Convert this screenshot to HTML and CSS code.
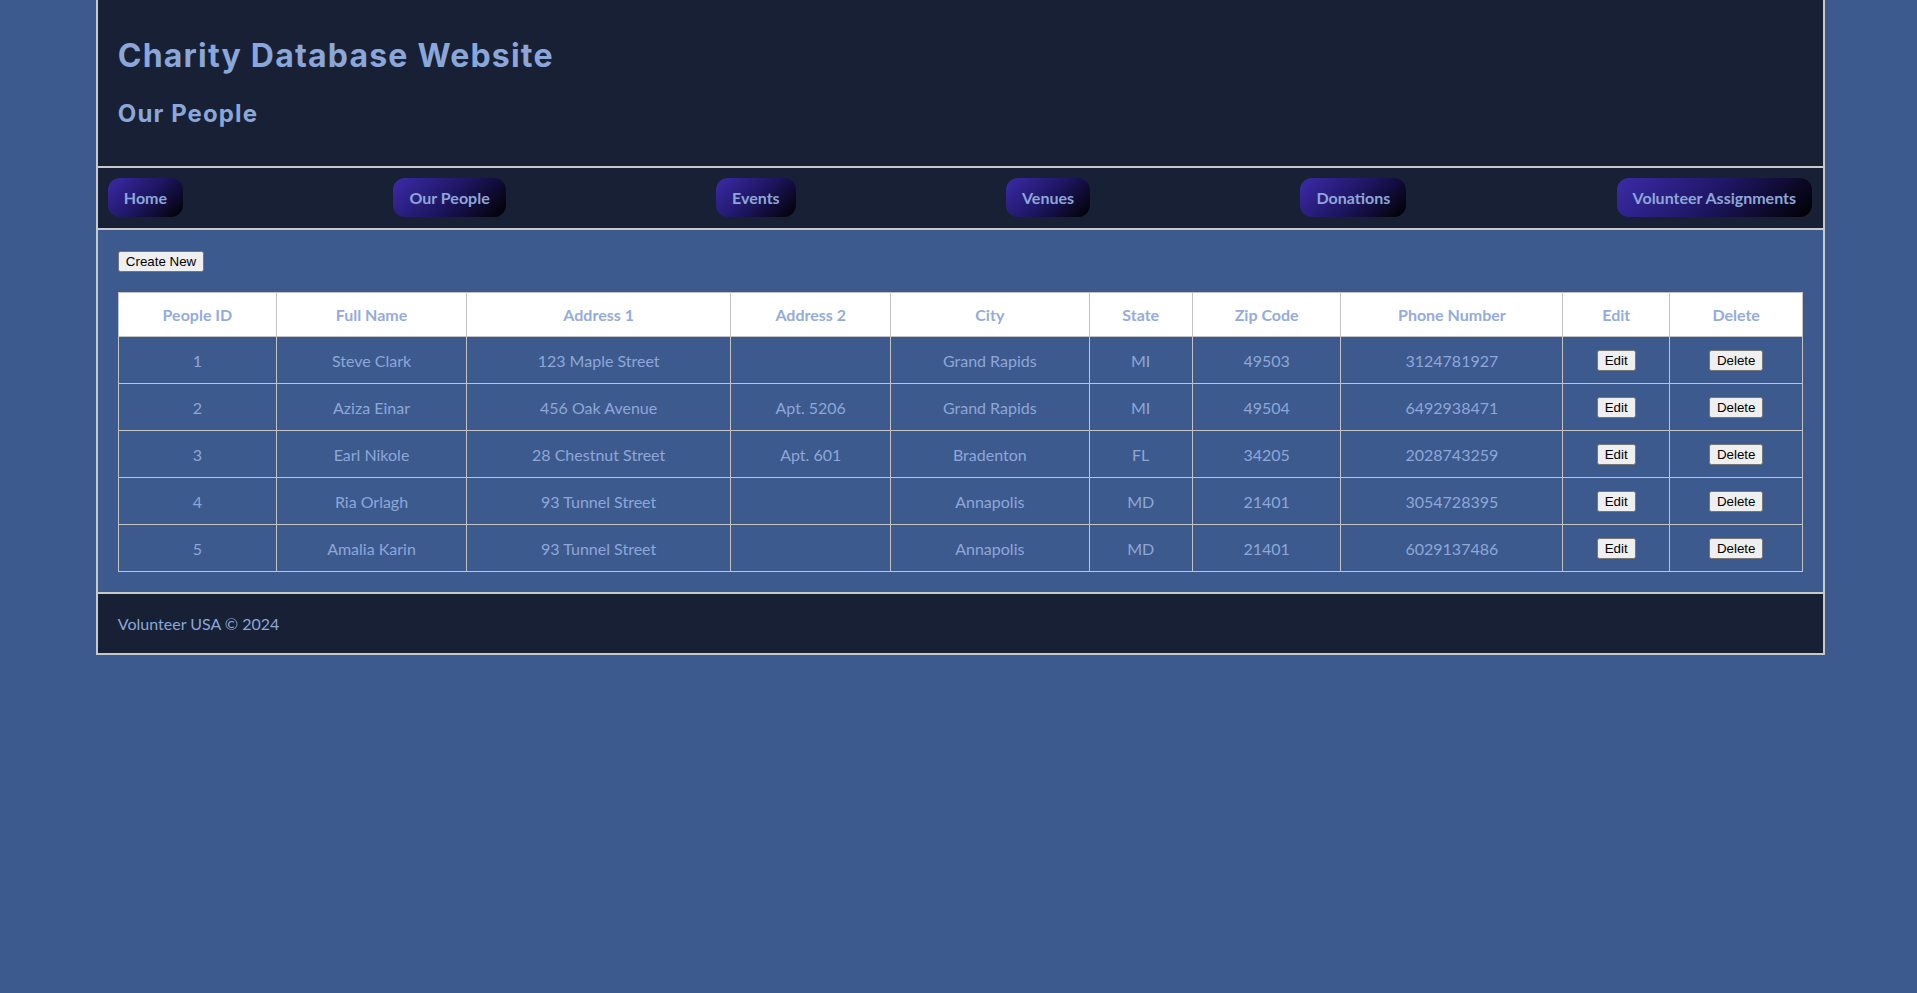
FILE: index.html
```html
<!DOCTYPE html>
<html lang="en">
<head>
<meta charset="utf-8">
<title>Our People</title>
<link rel="stylesheet" href="styles.css">
</head>
<body>
<div class="page">
  <header class="site-header">
    <h1 class="site-title">Charity Database Website</h1>
    <h2 class="page-title">Our People</h2>
  </header>
  <nav class="site-nav">
    <a class="nav-btn" href="#">Home</a>
    <a class="nav-btn" href="#">Our People</a>
    <a class="nav-btn" href="#">Events</a>
    <a class="nav-btn" href="#">Venues</a>
    <a class="nav-btn" href="#">Donations</a>
    <a class="nav-btn" href="#">Volunteer Assignments</a>
  </nav>
  <main class="content">
    <button class="native-btn create-btn" type="button">Create New</button>
    <table class="data-table">
      <thead>
        <tr>
          <th>People ID</th>
          <th>Full Name</th>
          <th>Address 1</th>
          <th>Address 2</th>
          <th>City</th>
          <th>State</th>
          <th>Zip Code</th>
          <th>Phone Number</th>
          <th>Edit</th>
          <th>Delete</th>
        </tr>
      </thead>
      <tbody>
        <tr>
          <td>1</td><td>Steve Clark</td><td>123 Maple Street</td><td></td><td>Grand Rapids</td><td>MI</td><td>49503</td><td>3124781927</td>
          <td><button class="native-btn" type="button">Edit</button></td><td><button class="native-btn" type="button">Delete</button></td>
        </tr>
        <tr>
          <td>2</td><td>Aziza Einar</td><td>456 Oak Avenue</td><td>Apt. 5206</td><td>Grand Rapids</td><td>MI</td><td>49504</td><td>6492938471</td>
          <td><button class="native-btn" type="button">Edit</button></td><td><button class="native-btn" type="button">Delete</button></td>
        </tr>
        <tr>
          <td>3</td><td>Earl Nikole</td><td>28 Chestnut Street</td><td>Apt. 601</td><td>Bradenton</td><td>FL</td><td>34205</td><td>2028743259</td>
          <td><button class="native-btn" type="button">Edit</button></td><td><button class="native-btn" type="button">Delete</button></td>
        </tr>
        <tr>
          <td>4</td><td>Ria Orlagh</td><td>93 Tunnel Street</td><td></td><td>Annapolis</td><td>MD</td><td>21401</td><td>3054728395</td>
          <td><button class="native-btn" type="button">Edit</button></td><td><button class="native-btn" type="button">Delete</button></td>
        </tr>
        <tr>
          <td>5</td><td>Amalia Karin</td><td>93 Tunnel Street</td><td></td><td>Annapolis</td><td>MD</td><td>21401</td><td>6029137486</td>
          <td><button class="native-btn" type="button">Edit</button></td><td><button class="native-btn" type="button">Delete</button></td>
        </tr>
      </tbody>
    </table>
  </main>
  <footer class="site-footer">
    <p class="footer-text">Volunteer USA © 2024</p>
  </footer>
</div>
</body>
</html>
```
FILE: styles.css
```css
html, body {
  margin: 0;
  padding: 0;
}

body {
  background: #3d5a8f;
  font-family: Lato, "Liberation Sans", sans-serif;
  font-size: 16px;
  color: #8da7d8;
}

.page {
  width: 90%;
  margin: 0 5%;
  border: 2px solid #c9c9c9;
  border-top: none;
}

.site-header {
  background: #172035;
  padding: 36px 20px 38px;
}

.site-title {
  margin: 0 0 24px;
  font-family: Inter, "DejaVu Sans", sans-serif;
  font-weight: 700;
  font-size: 32px;
  line-height: 39px;
  letter-spacing: 1.2px;
  color: #8ba6d8;
}

.page-title {
  margin: 0;
  font-family: Inter, "DejaVu Sans", sans-serif;
  font-weight: 700;
  font-size: 24px;
  line-height: 29px;
  letter-spacing: 1.1px;
  color: #8ba6d8;
}

.site-nav {
  display: flex;
  justify-content: space-between;
  align-items: center;
  background: #172035;
  border-top: 2px solid #c9c9c9;
  border-bottom: 2px solid #c9c9c9;
  padding: 10px 11px 11px 10px;
}

.nav-btn {
  display: block;
  padding: 10px 16px;
  border-radius: 12px;
  background: linear-gradient(135deg, #3b2ba8 0%, #1e1663 50%, #000000 100%);
  color: #8da7d8;
  font-family: Lato, sans-serif;
  font-weight: 700;
  font-size: 16px;
  line-height: 19px;
  text-decoration: none;
}

.content {
  padding: 21px 20px 20px;
}

.native-btn {
  font-family: "Liberation Sans", Arial, sans-serif;
  font-size: 13.333px;
}

.create-btn {
  display: block;
  margin: 0 0 20px;
}

.data-table {
  width: 100%;
  border-collapse: collapse;
}

.data-table th,
.data-table td {
  border: 1px solid #c3c3c3;
  padding: 12px;
  text-align: center;
  line-height: 19px;
  font-size: 16px;
}

.data-table th {
  background: #ffffff;
  color: #95acdb;
  font-weight: 700;
}

.data-table td {
  height: 22px;
  color: #8da7d8;
}

.site-footer {
  background: #172035;
  border-top: 2px solid #c9c9c9;
  padding: 20px;
}

.footer-text {
  margin: 0;
  line-height: 19px;
}
```
